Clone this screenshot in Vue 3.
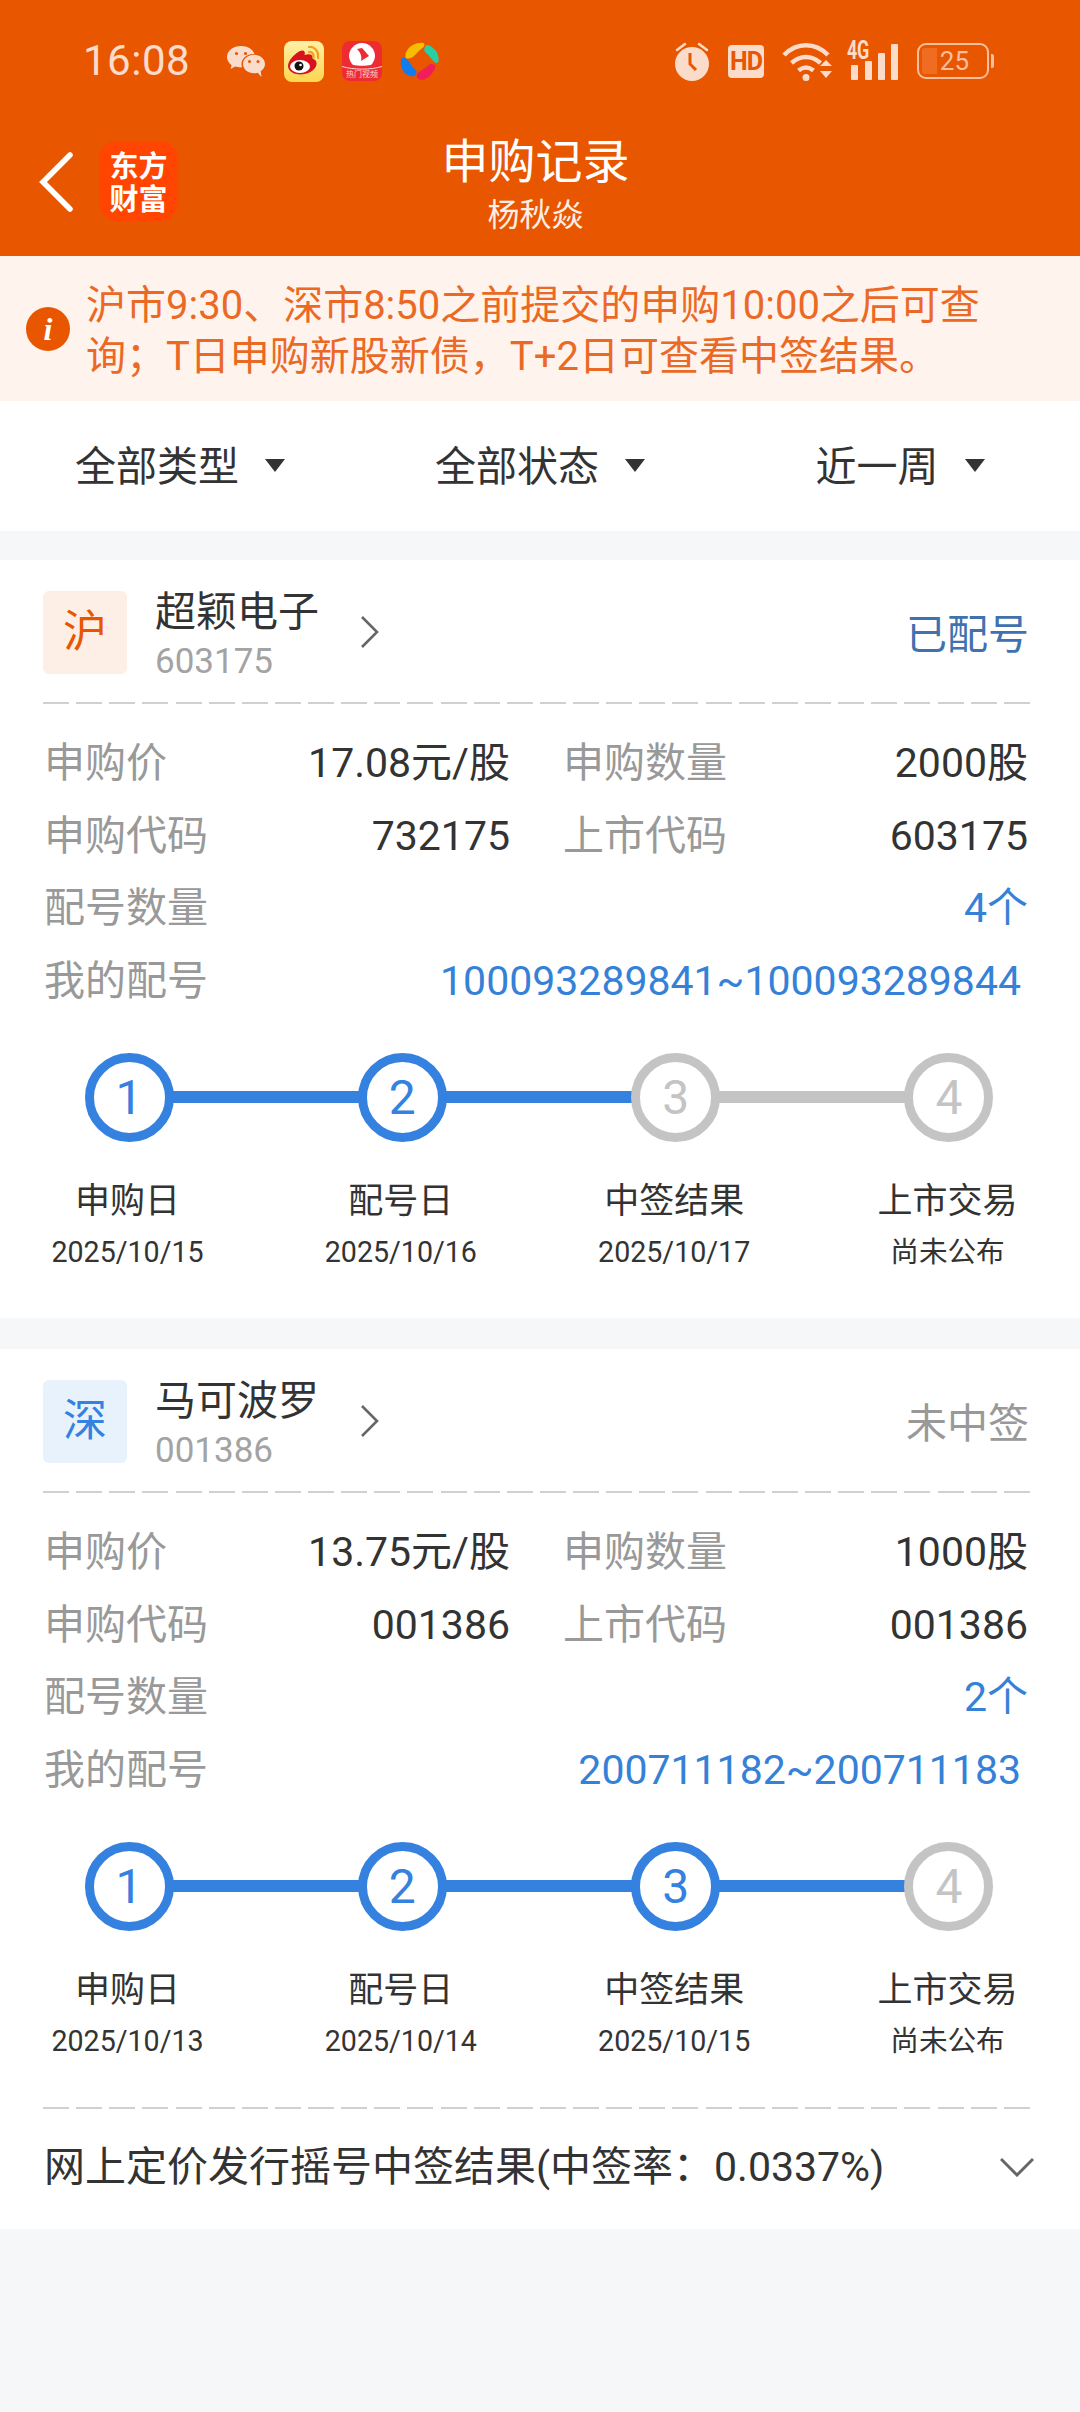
<script setup>
const filters = ['全部类型', '全部状态', '近一周']

const records = [
  {
    market: '沪', marketClass: 'sh', name: '超颖电子', code: '603175', status: '已配号', statusClass: 'assigned',
    price: '17.08元/股', qty: '2000股', buyCode: '732175', listCode: '603175', count: '4个',
    numbers: '100093289841~100093289844', done: 2,
    steps: [['申购日', '2025/10/15'], ['配号日', '2025/10/16'], ['中签结果', '2025/10/17'], ['上市交易', '尚未公布']]
  },
  {
    market: '深', marketClass: 'sz', name: '马可波罗', code: '001386', status: '未中签', statusClass: 'lost',
    price: '13.75元/股', qty: '1000股', buyCode: '001386', listCode: '001386', count: '2个',
    numbers: '200711182~200711183', done: 3, result: '网上定价发行摇号中签结果(中签率：0.0337%)',
    steps: [['申购日', '2025/10/13'], ['配号日', '2025/10/14'], ['中签结果', '2025/10/15'], ['上市交易', '尚未公布']]
  }
]
</script>

<template>
  <div class="page">
    <header class="top">
      <div class="status">
        <span class="time">16:08</span>
        <svg class="i-wechat" viewBox="0 0 38 31" width="38" height="31">
          <path d="M14 0C6.500 0 0 4.600 0 11c0 3.400 1.900 6.200 4.600 8.200L3.600 23l4.600-2.400c1.800.5 3.500.8 5.300.8.500 0 1 0 1.500-.1-.3-1-.5-2-.5-3.100 0-5.700 5.200-10.200 11.600-10.200.4 0 .9 0 1.300.1C26.200 3.300 20.600 0 14 0z" fill="#fbdccb"/>
          <circle cx="9.500" cy="7.500" r="1.600" fill="#e85600"/><circle cx="18.500" cy="7.500" r="1.600" fill="#e85600"/>
          <path d="M38 18c0-5.300-5.100-9.300-11-9.300S16 12.700 16 18s5.100 9.300 11 9.300c1.300 0 2.500-.2 3.700-.6L34.500 31l-.8-5.800C36.300 23.500 38 21 38 18z" fill="#fbdccb"/>
          <circle cx="22.500" cy="15.500" r="1.500" fill="#e85600"/><circle cx="31" cy="15.500" r="1.500" fill="#e85600"/>
        </svg>
        <svg class="i-weibo" viewBox="0 0 40 41" width="40" height="41">
          <defs><linearGradient id="wb" x1="0" y1="0" x2="0" y2="1"><stop offset="0" stop-color="#fff0a8"/><stop offset="1" stop-color="#fdd64f"/></linearGradient></defs>
          <rect width="40" height="41" rx="8" fill="url(#wb)"/>
          <path d="M4 25c0-5 6-12 12-15 3-1.500 6 0 4.500 4 4-1.500 9-1 8 3.500 3 1 4.500 3 4 6-1 6-9 10-16 10C10 33.500 4 30 4 25z" fill="#d8121c"/>
          <ellipse cx="16" cy="25.500" rx="10" ry="6.500" fill="#fff"/>
          <circle cx="15" cy="25" r="4.500" fill="#111"/><circle cx="16.500" cy="24" r="1.300" fill="#fff"/>
          <path d="M25 6c5-1 10 4 9 11M25 11c3-.5 5 2 4.500 5.500" fill="none" stroke="#f0a020" stroke-width="2.200" stroke-linecap="round"/>
        </svg>
        <div class="i-hot">
          <svg viewBox="0 0 40 40" width="40" height="40">
            <path d="M20 2c7 0 13 6 13 13 0 3-2 7-4 9-5 1-13 1-18 0-2-2-4-6-4-9C7 8 13 2 20 2z" fill="#fff"/>
            <path d="M15 8l5-1 7 8-8 5c1-4 0-8-4-12z" fill="#ee2b33"/>
            <path d="M0 25.500c12 3.500 28 3.500 40 0" fill="none" stroke="#fff" stroke-width="1" opacity=".8"/>
          </svg>
          <span class="hot-text">热门视频</span>
        </div>
        <svg class="i-color" viewBox="0 0 40 40" width="40" height="39">
          <path d="M5 15C5 6 15 0 23 1c2 0 2 3 0 5-4 2-6 6-10 9-3 2-8 3-8 0z" fill="#f9bd00"/>
          <path d="M25 5c1-3 4-2 7 0 5 3 8 9 7 15-1 2-3 2-5 0-3-3-4-6-8-9-2-2-2-4-1-6z" fill="#27cfa3"/>
          <path d="M1 17c2-2 4-1 6 1 3 3 4 7 8 10 2 2 2 4 0 6-2 2-6 1-9-1C1 30-1 22 1 17z" fill="#0f7df0"/>
          <path d="M17 36c-1-2 0-4 3-6 4-2 7-5 10-7 3-1 5 0 6 2-2 7-8 13-14 14-3 0-4-1-5-3z" fill="#f01e5a"/>
        </svg>
        <span class="status-spacer"></span>
        <svg class="i-alarm" viewBox="0 0 34 39" width="34" height="39">
          <path d="M2 8l8-6M32 8l-8-6" stroke="#fbdccb" stroke-width="2.500" stroke-linecap="round"/>
          <circle cx="17" cy="22" r="17" fill="#fbdccb"/>
          <path d="M15 11v11l6 6" fill="none" stroke="#e85600" stroke-width="3"/>
        </svg>
        <div class="i-hd">HD</div>
        <svg class="i-wifi" viewBox="0 0 50 39" width="50" height="39">
          <path d="M2 13c13-13 31-13 44 0" fill="none" stroke="#fbdccb" stroke-width="4.500"/>
          <path d="M9.500 21c9-8 20-8 29 0" fill="none" stroke="#fbdccb" stroke-width="4.500"/>
          <path d="M16.500 28.500c5-4 10-4 15 0" fill="none" stroke="#fbdccb" stroke-width="4.500"/>
          <circle cx="24" cy="35.500" r="3.500" fill="#fbdccb"/>
          <path d="M38 24l6-6 6 6zM38 29h12l-6 7z" fill="#fbdccb"/>
        </svg>
        <div class="i-signal">
          <span class="net">4G</span>
          <svg viewBox="0 0 52 38" width="52" height="38">
            <rect x="4" y="23" width="7" height="15" rx="1" fill="#fbdccb"/>
            <rect x="18" y="19" width="7" height="19" rx="1" fill="#fbdccb"/>
            <rect x="31" y="11" width="7" height="27" rx="1" fill="#fbdccb"/>
            <rect x="44" y="2" width="7" height="36" rx="1" fill="#fbdccb"/>
          </svg>
        </div>
        <div class="battery">
          <div class="battery-body"><span class="battery-fill"></span><span class="battery-num">25</span></div>
          <span class="battery-cap"></span>
        </div>
      </div>
      <nav class="nav">
        <svg class="back" viewBox="0 0 34 60" width="34" height="60">
          <path d="M31 3L4 30l27 27" fill="none" stroke="#fff" stroke-width="5.500" stroke-linecap="round"/>
        </svg>
        <div class="logo"><span class="logo-text">东方财富</span></div>
        <div class="title">
          <div class="title-main">申购记录</div>
          <div class="title-sub">杨秋焱</div>
        </div>
      </nav>
    </header>

    <section class="notice">
      <span class="notice-icon">i</span>
      <p class="notice-text">沪市9:30、深市8:50之前提交的申购10:00之后可查询；T日申购新股新债，T+2日可查看中签结果。</p>
    </section>

    <section class="filters">
      <div v-for="f in filters" :key="f" class="filter">
        <span>{{ f }}</span><i class="tri"></i>
      </div>
    </section>

    <article v-for="r in records" :key="r.code" class="card">
      <div class="card-main">
        <div class="head">
          <div class="badge" :class="r.marketClass">{{ r.market }}</div>
          <div class="names">
            <div class="name">{{ r.name }}</div>
            <div class="code">{{ r.code }}</div>
          </div>
          <svg class="go" viewBox="0 0 20 32" width="20" height="32">
            <path d="M2 1l15 15L2 31" fill="none" stroke="#666" stroke-width="2.600"/>
          </svg>
          <div class="state" :class="r.statusClass">{{ r.status }}</div>
        </div>
        <div class="rows">
          <div class="pair"><span class="lb">申购价</span><span class="val">{{ r.price }}</span></div>
          <div class="pair"><span class="lb">申购数量</span><span class="val">{{ r.qty }}</span></div>
          <div class="pair"><span class="lb">申购代码</span><span class="val">{{ r.buyCode }}</span></div>
          <div class="pair"><span class="lb">上市代码</span><span class="val">{{ r.listCode }}</span></div>
          <div class="pair wide"><span class="lb">配号数量</span><span class="val blue">{{ r.count }}</span></div>
          <div class="pair wide"><span class="lb">我的配号</span><span class="val blue inset">{{ r.numbers }}</span></div>
        </div>
        <div class="steps">
          <div v-for="(s, i) in r.steps" :key="s[0]" class="step"
               :class="{ on: i < r.done, linked: i < r.done, last: i === 3 }">
            <div class="dot">{{ i + 1 }}</div>
            <div class="step-name">{{ s[0] }}</div>
            <div class="step-date">{{ s[1] }}</div>
          </div>
        </div>
      </div>
      <div v-if="r.result" class="result">
        <span>{{ r.result }}</span>
        <svg viewBox="0 0 34 20" width="34" height="20">
          <path d="M1 2l16 16L33 2" fill="none" stroke="#666" stroke-width="3"/>
        </svg>
      </div>
    </article>
  </div>
</template>

<style>
html, body { margin: 0; padding: 0; background: #f6f7f9; }
</style>

<style scoped>
* { box-sizing: border-box; }
.page {
  width: 1080px;
  min-height: 2412px;
  background: #f6f7f9;
  overflow: hidden;
  font-family: Roboto, "Noto Sans CJK SC", sans-serif;
  font-size: 41px;
  color: #333;
}
.top { height: 256px; background: #e85600; color: #fff; }
.status {
  height: 122px;
  display: flex;
  align-items: center;
  padding-left: 83px;
  color: #fbdccb;
}
.time { font-size: 42px; line-height: 50px; width: 144px; letter-spacing: 0.5px; }
.i-weibo { margin-left: 19px; }
.i-hot {
  position: relative;
  width: 40px;
  height: 40px;
  margin-left: 18px;
  background: #ee2b33;
  border-radius: 8px;
  overflow: hidden;
}
.i-hot svg { display: block; }
.hot-text {
  position: absolute;
  left: 0;
  right: 0;
  bottom: 1px;
  text-align: center;
  font-size: 8px;
  line-height: 10px;
  color: #ffd3cf;
}
.i-color { margin-left: 18px; }
.status-spacer { flex: 1; }
.i-hd {
  width: 36px;
  height: 33px;
  margin-left: 19px;
  background: #fbdccb;
  border-radius: 4px;
  color: #e85600;
  font-size: 25px;
  font-weight: 700;
  line-height: 33px;
  text-align: center;
  letter-spacing: -1px;
}
.i-wifi { margin-left: 18px; }
.i-signal { position: relative; width: 52px; height: 38px; margin-left: 15px; }
.i-signal svg { display: block; }
.net {
  position: absolute;
  left: 0;
  top: -3px;
  font-size: 25px;
  font-weight: 700;
  line-height: 24px;
  letter-spacing: -0.5px;
  transform: scaleX(0.72);
  transform-origin: left top;
}
.battery { display: flex; align-items: center; margin-left: 18px; margin-right: 86px; }
.battery-body {
  position: relative;
  width: 72px;
  height: 36px;
  border: 2.5px solid #f9bf9f;
  border-radius: 9px;
  display: flex;
  justify-content: flex-end;
  align-items: center;
  padding-right: 18px;
}
.battery-fill {
  position: absolute;
  left: 3px;
  top: 3px;
  bottom: 3px;
  width: 15px;
  background: #f06c20;
  border-radius: 3px 0 0 3px;
}
.battery-num { font-size: 26px; line-height: 30px; color: #f9bf9f; }
.battery-cap { width: 3px; height: 14px; background: #f9bf9f; border-radius: 0 2px 2px 0; margin-left: 2px; }

.nav { position: relative; height: 134px; display: flex; align-items: flex-start; padding-left: 39px; }
.back { margin-top: 30px; }
.logo {
  width: 79px;
  height: 80px;
  margin: 19px 0 0 26px;
  background: #ff4500;
  border-radius: 18px;
  color: #fff;
  font-family: "Noto Sans CJK SC", sans-serif;
  font-size: 29px;
  font-weight: 700;
  line-height: 33px;
  display: flex;
  align-items: center;
  justify-content: center;
}
.logo-text { display: block; width: 60px; text-align: center; }
.title { position: absolute; left: 200px; right: 209px; top: 12px; text-align: center; }
.title-main { font-size: 47px; line-height: 56px; }
.title-sub { font-size: 32px; line-height: 42px; margin-top: 4px; color: #fdeee6; }

.notice {
  height: 145px;
  background: #fff3ee;
  display: flex;
  align-items: center;
  padding-left: 26px;
}
.notice-icon {
  width: 44px;
  height: 44px;
  flex: none;
  border-radius: 50%;
  background: #e85600;
  color: #fff;
  font-family: "Liberation Serif", serif;
  font-style: italic;
  font-weight: 700;
  font-size: 32px;
  line-height: 44px;
  text-align: center;
}
.notice-text {
  margin: 5px 0 0 16px;
  width: 910px;
  font-size: 40px;
  line-height: 51px;
  color: #ea6a25;
}

.filters { height: 130px; background: #fff; display: flex; margin-bottom: 29px; }
.filter { flex: 1; display: flex; align-items: center; justify-content: center; gap: 26px; padding-top: 2px; color: #333; line-height: 50px; }
.tri {
  width: 0;
  height: 0;
  border-left: 10px solid transparent;
  border-right: 10px solid transparent;
  border-top: 13px solid #333;
  margin-top: -3px;
}

.card { background: #fff; margin-bottom: 31px; }
.card-main { height: 758px; }
.head {
  height: 144px;
  margin: 0 50px 0 43px;
  padding-top: 31px;
  display: flex;
  align-items: flex-start;
  background: repeating-linear-gradient(90deg, #d0d0d0 0 26px, transparent 26px 33.13px) left bottom / 100% 2px no-repeat;
}
.badge {
  width: 84px;
  height: 83px;
  border-radius: 6px;
  text-align: center;
  font-size: 44px;
  line-height: 83px;
}
.badge.sh { background: #fdeee6; color: #e85600; }
.badge.sz { background: #e8f2fc; color: #3581e0; }
.names { width: 205px; margin-left: 28px; margin-top: -4px; }
.name { font-size: 41px; line-height: 50px; color: #333; }
.code { font-size: 35px; line-height: 40px; margin-top: 5px; color: #a3a3a3; }
.go { margin-top: 25px; }
.state { margin-left: auto; margin-top: 19px; margin-right: 1px; line-height: 50px; }
.assigned { color: #3f72ae; }
.lost { color: #999; }

.rows {
  margin: 23px 52px 0 44px;
  display: grid;
  grid-template-columns: 466px 465px;
  column-gap: 53px;
  grid-auto-rows: 72.5px;
}
.pair { display: flex; justify-content: space-between; align-items: center; white-space: nowrap; line-height: 50px; }
.wide { grid-column: 1 / -1; }
.lb { color: #999; }
.val { color: #333; }
.blue { color: #3581d8; }
.inset { margin-right: 7px; }

.steps {
  display: flex;
  justify-content: space-between;
  margin-top: 36px;
  padding: 0 21px 0 19px;
}
.step { position: relative; width: 220px; text-align: center; }
.dot {
  position: relative;
  z-index: 1;
  width: 89px;
  height: 89px;
  margin: 0 auto;
  border: 9px solid #c4c4c4;
  border-radius: 50%;
  background: #fff;
  color: #c4c4c4;
  font-size: 48px;
  line-height: 71px;
}
.on .dot { border-color: #3581e0; color: #3581e0; }
.step::after {
  content: "";
  position: absolute;
  left: calc(50% + 40px);
  top: 38px;
  width: 194px;
  height: 12px;
  background: #c4c4c4;
}
.step.linked::after { background: #3581e0; }
.step.last::after { display: none; }
.step-name { margin-top: 38px; padding-right: 3px; font-size: 35px; line-height: 44px; color: #333; }
.step-date { margin-top: 9px; padding-right: 3px; font-size: 28.6px; line-height: 38px; color: #333; }

.result {
  height: 122px;
  margin: 0 50px 0 43px;
  padding: 0 0 2px 1px;
  display: flex;
  align-items: center;
  justify-content: space-between;
  background: repeating-linear-gradient(90deg, #d0d0d0 0 26px, transparent 26px 33.13px) left top / 100% 2px no-repeat;
  white-space: nowrap;
  line-height: 50px;
}
.result svg { margin-right: -4px; }
</style>
